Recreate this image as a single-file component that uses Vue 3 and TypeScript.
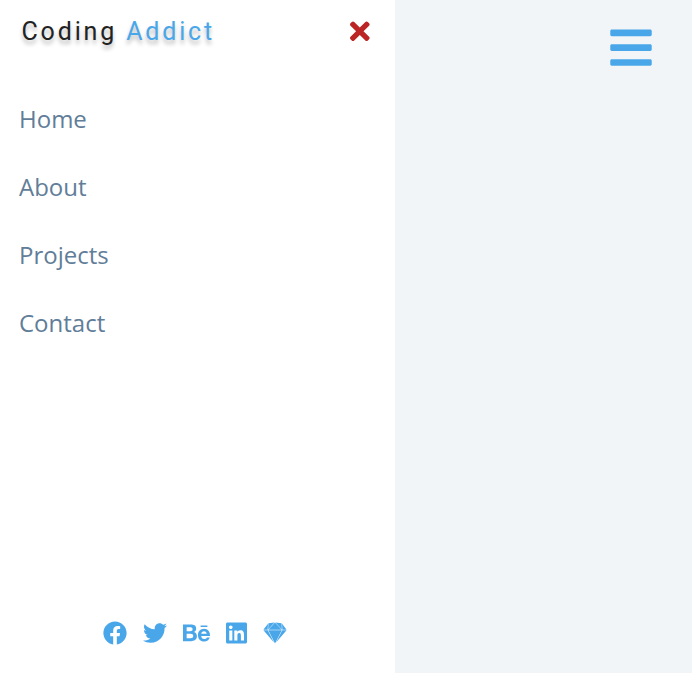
<script setup lang="ts">
import { ref } from 'vue'

interface SocialIcon {
  name: string
  width: number
  path: string
}

const isOpen = ref<boolean>(true)

const links: string[] = ['Home', 'About', 'Projects', 'Contact']

const social: SocialIcon[] = [
  {
    name: 'Facebook',
    width: 512,
    path: 'M504 256C504 119 393 8 256 8S8 119 8 256c0 123.78 90.69 226.38 209.25 245V327.69h-63V256h63v-54.64c0-62.15 37-96.48 93.67-96.48 27.14 0 55.52 4.84 55.52 4.84v61h-31.28c-30.8 0-40.41 19.12-40.41 38.73V256h68.78l-11 71.69h-57.78V501C413.31 482.38 504 379.78 504 256z',
  },
  {
    name: 'Twitter',
    width: 512,
    path: 'M459.37 151.716c.325 4.548.325 9.097.325 13.645 0 138.72-105.583 298.558-298.558 298.558-59.452 0-114.68-17.219-161.137-47.106 8.447.974 16.568 1.299 25.34 1.299 49.055 0 94.213-16.568 130.274-44.832-46.132-.975-84.792-31.188-98.112-72.772 6.498.974 12.995 1.624 19.818 1.624 9.421 0 18.843-1.3 27.614-3.573-48.081-9.747-84.143-51.98-84.143-102.985v-1.299c13.969 7.797 30.214 12.67 47.431 13.319-28.264-18.843-46.781-51.005-46.781-87.391 0-19.492 5.197-37.36 14.294-52.954 51.655 63.675 129.3 105.258 216.365 109.807-1.624-7.797-2.599-15.918-2.599-24.04 0-57.828 46.782-104.934 104.934-104.934 30.213 0 57.502 12.67 76.67 33.137 23.715-4.548 46.456-13.32 66.599-25.34-7.798 24.366-24.366 44.833-46.132 57.827 21.117-2.273 41.584-8.122 60.426-16.243-14.292 20.791-32.161 39.308-52.628 54.253z',
  },
  {
    name: 'Behance',
    width: 576,
    path: 'M232 237.2c31.8-15.2 48.4-38.2 48.4-74 0-70.6-52.6-87.8-113.3-87.8H0v354.4h171.8c64.4 0 124.9-30.9 124.9-102.9 0-44.5-21.1-77.4-64.7-89.7zM77.9 135.9H151c28.1 0 53.4 7.9 53.4 40.5 0 30.1-19.7 42.2-47.5 42.2h-79v-82.7zm83.3 233.7H77.9V272h84.9c34.3 0 56 14.3 56 50.6 0 35.8-25.9 47-57.6 47zm358.5-240.7H376V94h143.7v34.9zM576 305.2c0-75.9-44.4-139.2-124.9-139.2-78.2 0-131.3 58.8-131.3 135.8 0 79.9 50.3 134.7 131.3 134.7 61.3 0 101-27.6 120.1-86.3H509c-6.7 21.9-34.3 33.5-55.7 33.5-41.3 0-63-24.2-63-65.3h185.1c.3-4.2.6-8.7.6-13.2zM390.4 274c2.3-33.7 24.7-54.8 58.5-54.8 35.4 0 53.2 20.8 56.2 54.8H390.4z',
  },
  {
    name: 'LinkedIn',
    width: 448,
    path: 'M416 32H31.9C14.3 32 0 46.5 0 64.3v383.4C0 465.5 14.3 480 31.9 480H416c17.6 0 32-14.5 32-32.3V64.3c0-17.8-14.4-32.3-32-32.3zM135.4 416H69V202.2h66.5V416zm-33.2-243c-21.3 0-38.5-17.3-38.5-38.5S80.9 96 102.2 96c21.2 0 38.5 17.3 38.5 38.5 0 21.3-17.2 38.5-38.5 38.5zm282.1 243h-66.4V312c0-24.8-.5-56.7-34.5-56.7-34.6 0-39.9 27-39.9 54.9V416h-66.4V202.2h63.7v29.2h.9c8.9-16.8 30.6-34.5 62.9-34.5 67.2 0 79.7 44.3 79.7 101.9V416z',
  },
  {
    name: 'Sketch',
    width: 512,
    path: 'M27.5 162.2L9 187.1h90.5l6.9-130.7-78.9 105.8zM396.3 45.7L267.7 32l135.7 147.2-7.1-133.5zM112.2 218.3l-11.2-22H9.9L234.8 458zm2-31.2h284l-81.5-88.5L256.3 33zm297.3 9.1L277.6 458l224.8-261.7h-90.9zM415.4 69L406 56.4l.9 17.3 6.1 113.4h90.3zM113.5 93.5l-4.6 85.6L244.7 32 116.1 45.7zm287.7 102.7h-290l42.4 82.9L256.3 480l144.9-283.8z',
  },
]
</script>

<template>
  <div class="layout">
    <aside v-if="isOpen" class="sidebar">
      <header class="sidebar-header">
        <div class="logo">Coding <span class="logo-accent">Addict</span></div>
        <button class="close-btn" type="button" @click="isOpen = false">
          <svg viewBox="0 0 352 512">
            <path d="M242.72 256l100.07-100.07c12.28-12.28 12.28-32.19 0-44.48l-22.24-22.24c-12.28-12.28-32.19-12.28-44.48 0L176 189.28 75.93 89.21c-12.28-12.28-32.19-12.28-44.48 0L9.21 111.45c-12.28 12.28-12.28 32.19 0 44.48L109.28 256 9.21 356.07c-12.28 12.28-12.28 32.19 0 44.48l22.24 22.24c12.28 12.28 32.2 12.28 44.48 0L176 322.72l100.07 100.07c12.28 12.28 32.2 12.28 44.48 0l22.24-22.24c12.28-12.28 12.28-32.19 0-44.48L242.72 256z" />
          </svg>
        </button>
      </header>
      <ul class="links">
        <li v-for="link in links" :key="link"><a href="#">{{ link }}</a></li>
      </ul>
      <ul class="social-icons">
        <li v-for="icon in social" :key="icon.name">
          <a href="#">
            <svg :viewBox="`0 0 ${icon.width} 512`"><path :d="icon.path" /></svg>
          </a>
        </li>
      </ul>
    </aside>
    <main class="content">
      <button class="toggle-btn" type="button" @click="isOpen = !isOpen">
        <svg viewBox="0 0 448 512">
          <path d="M16 132h416c8.837 0 16-7.163 16-16V76c0-8.837-7.163-16-16-16H16C7.163 60 0 67.163 0 76v40c0 8.837 7.163 16 16 16zm0 160h416c8.837 0 16-7.163 16-16v-40c0-8.837-7.163-16-16-16H16c-8.837 0-16 7.163-16 16v40c0 8.837 7.163 16 16 16zm0 160h416c8.837 0 16-7.163 16-16v-40c0-8.837-7.163-16-16-16H16c-8.837 0-16 7.163-16 16v40c0 8.837 7.163 16 16 16z" />
        </svg>
      </button>
    </main>
  </div>
</template>

<style>
body {
  margin: 0;
  background: #f1f5f8;
}
</style>

<style scoped>
.layout {
  display: flex;
  height: 100vh;
  font-family: 'Open Sans', sans-serif;
}
.sidebar {
  display: grid;
  grid-template-rows: auto 1fr auto;
  width: 395px;
  box-sizing: border-box;
  background: #fff;
}
.sidebar-header {
  display: flex;
  align-items: center;
  justify-content: space-between;
  height: 63px;
  padding: 0 25.4px 0 21.5px;
}
.logo {
  padding-top: 1px;
  font-family: Roboto, sans-serif;
  font-size: 25px;
  line-height: 30px;
  letter-spacing: 2.84px;
  color: #222;
  text-shadow: 0 4px 4px rgba(0, 0, 0, 0.28);
  white-space: nowrap;
}
.logo-accent {
  color: #49a6e9;
}
button {
  display: flex;
  padding: 0;
  border: 0;
  background: transparent;
  cursor: pointer;
}
svg {
  display: block;
  fill: currentColor;
}
.close-btn {
  color: #bb2525;
}
.close-btn svg {
  height: 28.5px;
}
.links,
.social-icons {
  margin: 0;
  padding: 0;
  list-style: none;
}
.links {
  padding-top: 22px;
}
.links a {
  display: block;
  padding: 16px 19px;
  font-size: 24px;
  line-height: 36px;
  color: #617d98;
  text-decoration: none;
}
.social-icons {
  display: flex;
  justify-content: center;
  gap: 16px;
  padding: 0 5px 28px 0;
}
.social-icons a {
  display: block;
  color: #49a6e9;
}
.social-icons svg {
  height: 24px;
}
.content {
  display: flex;
  flex: 1;
  align-items: flex-start;
  justify-content: flex-end;
  padding: 24px 40px 0 0;
}
.toggle-btn {
  color: #49a6e9;
}
.toggle-btn svg {
  width: 42px;
  height: 47.4px;
}
</style>
